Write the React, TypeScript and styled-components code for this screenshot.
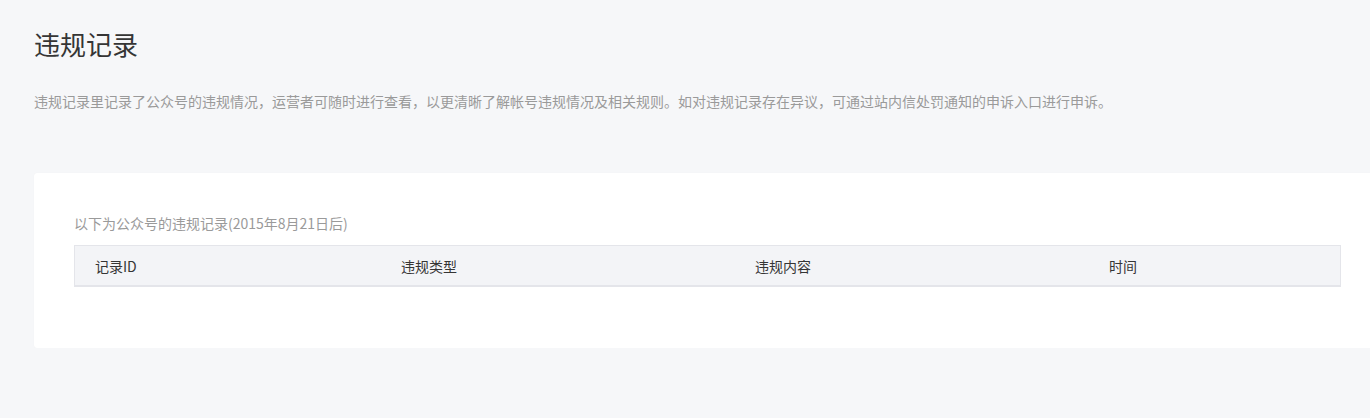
import React from 'react';
import styled, { createGlobalStyle } from 'styled-components';

const GlobalStyle = createGlobalStyle`
  html, body {
    margin: 0;
    padding: 0;
    background-color: #f6f7f9;
    overflow: hidden;
  }
  body {
    font-family: "Noto Sans CJK SC", "Noto Sans", sans-serif;
    color: #333;
  }
`;

const Page = styled.div`
  padding: 26px 0 0 34px;
  width: 1347px;
`;

const Title = styled.h2`
  margin: 0;
  font-size: 26px;
  font-weight: 400;
  line-height: 36px;
  color: #353535;
`;

const Desc = styled.p`
  margin: 29px 0 0;
  font-size: 14px;
  line-height: 20px;
  color: #9a9a9a;
`;

const Card = styled.section`
  margin-top: 62px;
  background-color: #fff;
  border-radius: 3px;
  box-shadow: 0 0 1px rgba(0, 0, 0, 0.06);
  padding: 40px 40px 61px;
`;

const Caption = styled.div`
  font-size: 14px;
  line-height: 20px;
  color: #9a9a9a;
  margin-bottom: 12px;
`;

const HeadRow = styled.div`
  display: grid;
  grid-template-columns: 306px 354px 354px 1fr;
  height: 39px;
  align-items: center;
  background-color: #f3f4f7;
  border: 1px solid #e4e5ea;
  border-bottom-width: 2px;
`;

const HeadCell = styled.div`
  padding-left: 20px;
  font-size: 14px;
  color: #353535;
`;

const columns = ['记录ID', '违规类型', '违规内容', '时间'];

const App: React.FC = () => {
  return (
    <>
      <GlobalStyle />
      <Page>
        <Title>违规记录</Title>
        <Desc>
          违规记录里记录了公众号的违规情况，运营者可随时进行查看，以更清晰了解帐号违规情况及相关规则。如对违规记录存在异议，可通过站内信处罚通知的申诉入口进行申诉。
        </Desc>
        <Card>
          <Caption>以下为公众号的违规记录(2015年8月21日后)</Caption>
          <HeadRow>
            {columns.map((c) => (
              <HeadCell key={c}>{c}</HeadCell>
            ))}
          </HeadRow>
        </Card>
      </Page>
    </>
  );
};

export default App;
